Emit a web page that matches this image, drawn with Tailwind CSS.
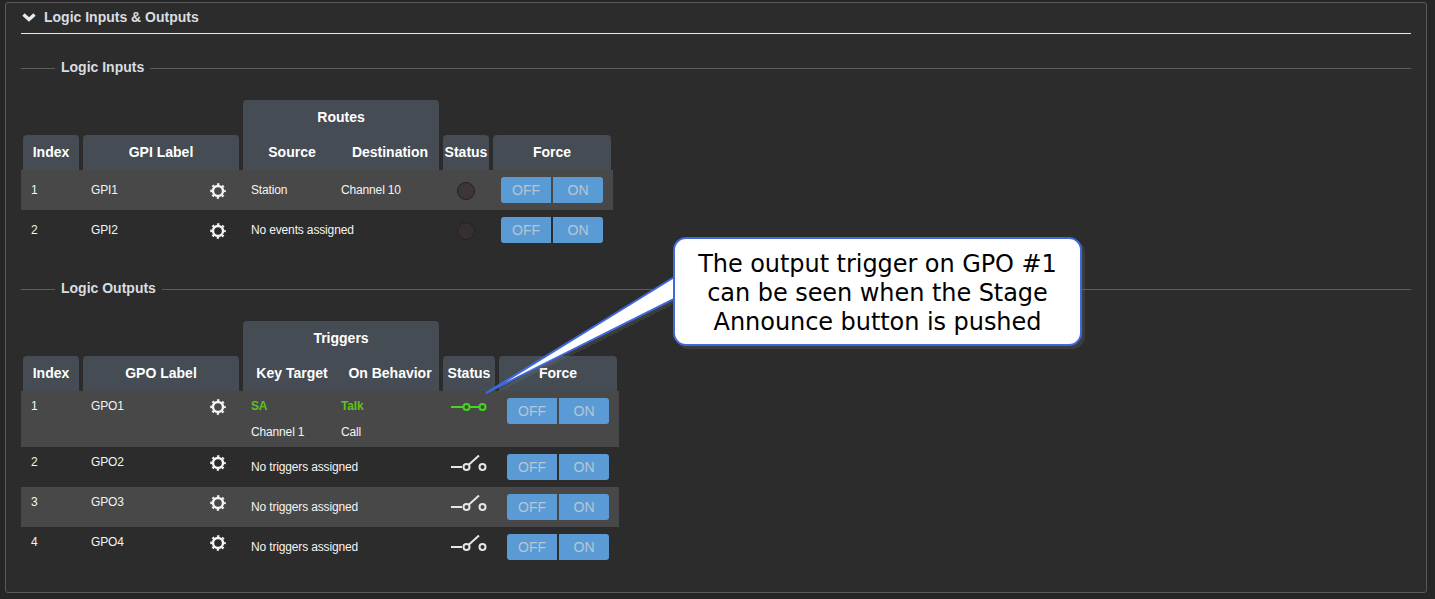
<!DOCTYPE html>
<html>
<head>
<meta charset="utf-8">
<script src="https://cdn.jsdelivr.net/npm/@tailwindcss/browser@4"></script>
</head>
<body class="bg-[#262626] font-['Liberation_Sans',Arial,sans-serif]">
<svg width="0" height="0" class="absolute">
  <defs>
    <g id="gear" fill="none" stroke="#f4f4f4">
      <circle cx="8" cy="8" r="6.9" stroke-width="1.8" stroke-dasharray="2.4 3.02" stroke-dashoffset="1.2"/>
      <circle cx="8" cy="8" r="5" stroke-width="2.4"/>
    </g>
    <g id="open" fill="none" stroke="#e6e6e6" stroke-width="2">
      <path d="M0 12H11"/><circle cx="15.5" cy="12" r="3"/><path d="M18 9.5L28 .5"/><circle cx="31.5" cy="12" r="3"/>
    </g>
    <g id="closed" fill="none" stroke="#3fd81a" stroke-width="2">
      <path d="M0 7H12"/><circle cx="15.5" cy="7" r="3"/><path d="M19 7H28"/><circle cx="31.5" cy="7" r="3"/>
    </g>
  </defs>
</svg>
<div class="relative h-[599px] w-[1435px] overflow-hidden">
  <section class="ml-[5px] mt-[2px] h-[591px] w-[1422px] rounded-[3px] border border-[#5a5a5a] bg-[#2b2b2b] bg-[repeating-conic-gradient(#2a2a2a_0_25%,#2e2e2e_0_50%)] bg-[length:2px_2px] px-[15px]">
    <header class="flex h-[31px] items-center gap-[8px] border-b border-[#e8e8e8] pl-[1px] pb-[2px] text-[14px] font-bold text-[#d8dde0]">
      <svg width="14" height="9" viewBox="0 0 14 9"><path d="M1.5 1.5L7 6.5L12.5 1.5" fill="none" stroke="#e8ecee" stroke-width="3.4"/></svg>
      <span>Logic Inputs &amp; Outputs</span>
    </header>

    <div class="mt-[24px] flex h-[20px] items-center text-[14px] font-bold text-[#d8dde0]">
      <div class="h-px w-[34px] bg-[#5e5e5e]"></div>
      <span class="mb-[2px] px-[6px]">Logic Inputs</span>
      <div class="h-px flex-1 bg-[#5e5e5e]"></div>
    </div>

    <div class="mt-[22px] w-[592px] text-[12px] tracking-[-0.15px] text-[#f4f4f4]">
      <div class="grid h-[70px] grid-cols-[56px_156px_196px_46px_118px] items-end gap-x-[4px] pl-[2px] text-[14px] font-bold tracking-normal text-white">
        <div class="flex h-[35px] items-center justify-center rounded-t-[4px] bg-[#454c54]">Index</div>
        <div class="flex h-[35px] items-center justify-center rounded-t-[4px] bg-[#454c54]">GPI Label</div>
        <div class="h-[70px] rounded-t-[4px] bg-[#454c54]">
          <div class="flex h-[35px] items-center justify-center">Routes</div>
          <div class="flex h-[35px] items-center"><span class="w-[98px] text-center">Source</span><span class="w-[98px] text-center">Destination</span></div>
        </div>
        <div class="flex h-[35px] items-center justify-center rounded-t-[4px] bg-[#454c54]">Status</div>
        <div class="flex h-[35px] items-center justify-center rounded-t-[4px] bg-[#454c54]">Force</div>
      </div>
      <div class="grid h-[40px] grid-cols-[56px_156px_196px_46px_118px] items-center gap-x-[4px] bg-[#484848] pl-[2px]">
        <div class="pl-2">1</div>
        <div class="flex items-center justify-between pl-2 pr-[13px]"><span>GPI1</span><svg class="mt-[2px]" width="16" height="16" viewBox="0 0 16 16"><use href="#gear"/></svg></div>
        <div class="flex pl-2"><span class="w-[90px]">Station</span><span>Channel 10</span></div>
        <div class="mt-[1px] flex justify-center"><span class="size-[18px] rounded-full border border-[#222] bg-[#3d3536]"></span></div>
        <div class="flex gap-[2px] pl-2 text-[14px] tracking-normal text-[#b5c6d4]"><span class="flex h-[26px] w-[50px] items-center justify-center rounded-l-[3px] bg-[#5b9bd5]">OFF</span><span class="flex h-[26px] w-[50px] items-center justify-center rounded-r-[3px] bg-[#5b9bd5]">ON</span></div>
      </div>
      <div class="grid h-[40px] grid-cols-[56px_156px_196px_46px_118px] items-center gap-x-[4px] pl-[2px]">
        <div class="pl-2">2</div>
        <div class="flex items-center justify-between pl-2 pr-[13px]"><span>GPI2</span><svg class="mt-[2px]" width="16" height="16" viewBox="0 0 16 16"><use href="#gear"/></svg></div>
        <div class="pl-2">No events assigned</div>
        <div class="mt-[1px] flex justify-center"><span class="size-[18px] rounded-full border border-[#222] bg-[#352f30]"></span></div>
        <div class="flex gap-[2px] pl-2 text-[14px] tracking-normal text-[#b5c6d4]"><span class="flex h-[26px] w-[50px] items-center justify-center rounded-l-[3px] bg-[#5b9bd5]">OFF</span><span class="flex h-[26px] w-[50px] items-center justify-center rounded-r-[3px] bg-[#5b9bd5]">ON</span></div>
      </div>
    </div>

    <div class="mt-[29px] flex h-[20px] items-center text-[14px] font-bold text-[#d8dde0]">
      <div class="h-px w-[34px] bg-[#5e5e5e]"></div>
      <span class="mb-[2px] px-[6px]">Logic Outputs</span>
      <div class="h-px flex-1 bg-[#5e5e5e]"></div>
    </div>

    <div class="mt-[22px] w-[598px] text-[12px] tracking-[-0.15px] text-[#f4f4f4]">
      <div class="grid h-[70px] grid-cols-[56px_156px_196px_52px_118px] items-end gap-x-[4px] pl-[2px] text-[14px] font-bold tracking-normal text-white">
        <div class="flex h-[35px] items-center justify-center rounded-t-[4px] bg-[#454c54]">Index</div>
        <div class="flex h-[35px] items-center justify-center rounded-t-[4px] bg-[#454c54]">GPO Label</div>
        <div class="h-[70px] rounded-t-[4px] bg-[#454c54]">
          <div class="flex h-[35px] items-center justify-center">Triggers</div>
          <div class="flex h-[35px] items-center"><span class="w-[98px] text-center">Key Target</span><span class="w-[98px] text-center">On Behavior</span></div>
        </div>
        <div class="flex h-[35px] items-center justify-center rounded-t-[4px] bg-[#454c54]">Status</div>
        <div class="flex h-[35px] items-center justify-center rounded-t-[4px] bg-[#454c54]">Force</div>
      </div>
      <div class="grid h-[56px] grid-cols-[56px_156px_196px_52px_118px] gap-x-[4px] bg-[#484848] pl-[2px] pt-[6px]">
        <div class="pl-2">1</div>
        <div class="flex justify-between pl-2 pr-[13px]"><span>GPO1</span><svg class="mt-[2px]" width="16" height="16" viewBox="0 0 16 16"><use href="#gear"/></svg></div>
        <div class="grid grid-cols-[90px_1fr] grid-rows-[26px_14px] pl-2"><span class="font-bold text-[#5fc21c]">SA</span><span class="font-bold text-[#5fc21c]">Talk</span><span>Channel 1</span><span>Call</span></div>
        <div class="flex justify-center pt-[3px]"><svg class="self-start" width="36" height="14" viewBox="0 0 36 14"><use href="#closed"/></svg></div>
        <div class="mt-[1px] flex gap-[2px] pl-2 text-[14px] tracking-normal text-[#b5c6d4]"><span class="flex h-[26px] w-[50px] items-center justify-center rounded-l-[3px] bg-[#5b9bd5]">OFF</span><span class="flex h-[26px] w-[50px] items-center justify-center rounded-r-[3px] bg-[#5b9bd5]">ON</span></div>
      </div>
      <div class="grid h-[40px] grid-cols-[56px_156px_196px_52px_118px] gap-x-[4px] pl-[2px] pt-[6px]">
        <div class="pl-2">2</div>
        <div class="flex justify-between pl-2 pr-[13px]"><span>GPO2</span><svg class="mt-[2px]" width="16" height="16" viewBox="0 0 16 16"><use href="#gear"/></svg></div>
        <div class="pl-2 pt-[5px]">No triggers assigned</div>
        <div class="flex justify-center pt-[2px]"><svg class="self-start" width="36" height="18" viewBox="0 0 36 18"><use href="#open"/></svg></div>
        <div class="mt-[1px] flex gap-[2px] pl-2 text-[14px] tracking-normal text-[#b5c6d4]"><span class="flex h-[26px] w-[50px] items-center justify-center rounded-l-[3px] bg-[#5b9bd5]">OFF</span><span class="flex h-[26px] w-[50px] items-center justify-center rounded-r-[3px] bg-[#5b9bd5]">ON</span></div>
      </div>
      <div class="grid h-[40px] grid-cols-[56px_156px_196px_52px_118px] gap-x-[4px] bg-[#484848] pl-[2px] pt-[6px]">
        <div class="pl-2">3</div>
        <div class="flex justify-between pl-2 pr-[13px]"><span>GPO3</span><svg class="mt-[2px]" width="16" height="16" viewBox="0 0 16 16"><use href="#gear"/></svg></div>
        <div class="pl-2 pt-[5px]">No triggers assigned</div>
        <div class="flex justify-center pt-[2px]"><svg class="self-start" width="36" height="18" viewBox="0 0 36 18"><use href="#open"/></svg></div>
        <div class="mt-[1px] flex gap-[2px] pl-2 text-[14px] tracking-normal text-[#b5c6d4]"><span class="flex h-[26px] w-[50px] items-center justify-center rounded-l-[3px] bg-[#5b9bd5]">OFF</span><span class="flex h-[26px] w-[50px] items-center justify-center rounded-r-[3px] bg-[#5b9bd5]">ON</span></div>
      </div>
      <div class="grid h-[40px] grid-cols-[56px_156px_196px_52px_118px] gap-x-[4px] pl-[2px] pt-[6px]">
        <div class="pl-2">4</div>
        <div class="flex justify-between pl-2 pr-[13px]"><span>GPO4</span><svg class="mt-[2px]" width="16" height="16" viewBox="0 0 16 16"><use href="#gear"/></svg></div>
        <div class="pl-2 pt-[5px]">No triggers assigned</div>
        <div class="flex justify-center pt-[2px]"><svg class="self-start" width="36" height="18" viewBox="0 0 36 18"><use href="#open"/></svg></div>
        <div class="mt-[1px] flex gap-[2px] pl-2 text-[14px] tracking-normal text-[#b5c6d4]"><span class="flex h-[26px] w-[50px] items-center justify-center rounded-l-[3px] bg-[#5b9bd5]">OFF</span><span class="flex h-[26px] w-[50px] items-center justify-center rounded-r-[3px] bg-[#5b9bd5]">ON</span></div>
      </div>
    </div>
  </section>

  <!-- callout overlay -->
  <svg class="absolute left-0 top-0" width="1435" height="599" viewBox="0 0 1435 599">
    <path d="M490 396L680 281V301Z" fill="#808080" fill-opacity="0.2"/>
    <path d="M486 393L676 276V298Z" fill="#fff" stroke="#3f68dc" stroke-width="2"/>
  </svg>
  <div class="absolute left-[673px] top-[237px] flex h-[109px] w-[409px] items-center justify-center rounded-[13px] border-2 border-[#3f68dc] bg-white pt-[3px] text-center font-['DejaVu_Sans',Verdana,sans-serif] text-[24px] leading-[29px] tracking-[-0.06px] text-black shadow-[3px_3px_0_rgba(128,128,128,0.2)]">
    <p>The output trigger on GPO #1<br>can be seen when the Stage<br>Announce button is pushed</p>
  </div>
</div>
</body>
</html>
